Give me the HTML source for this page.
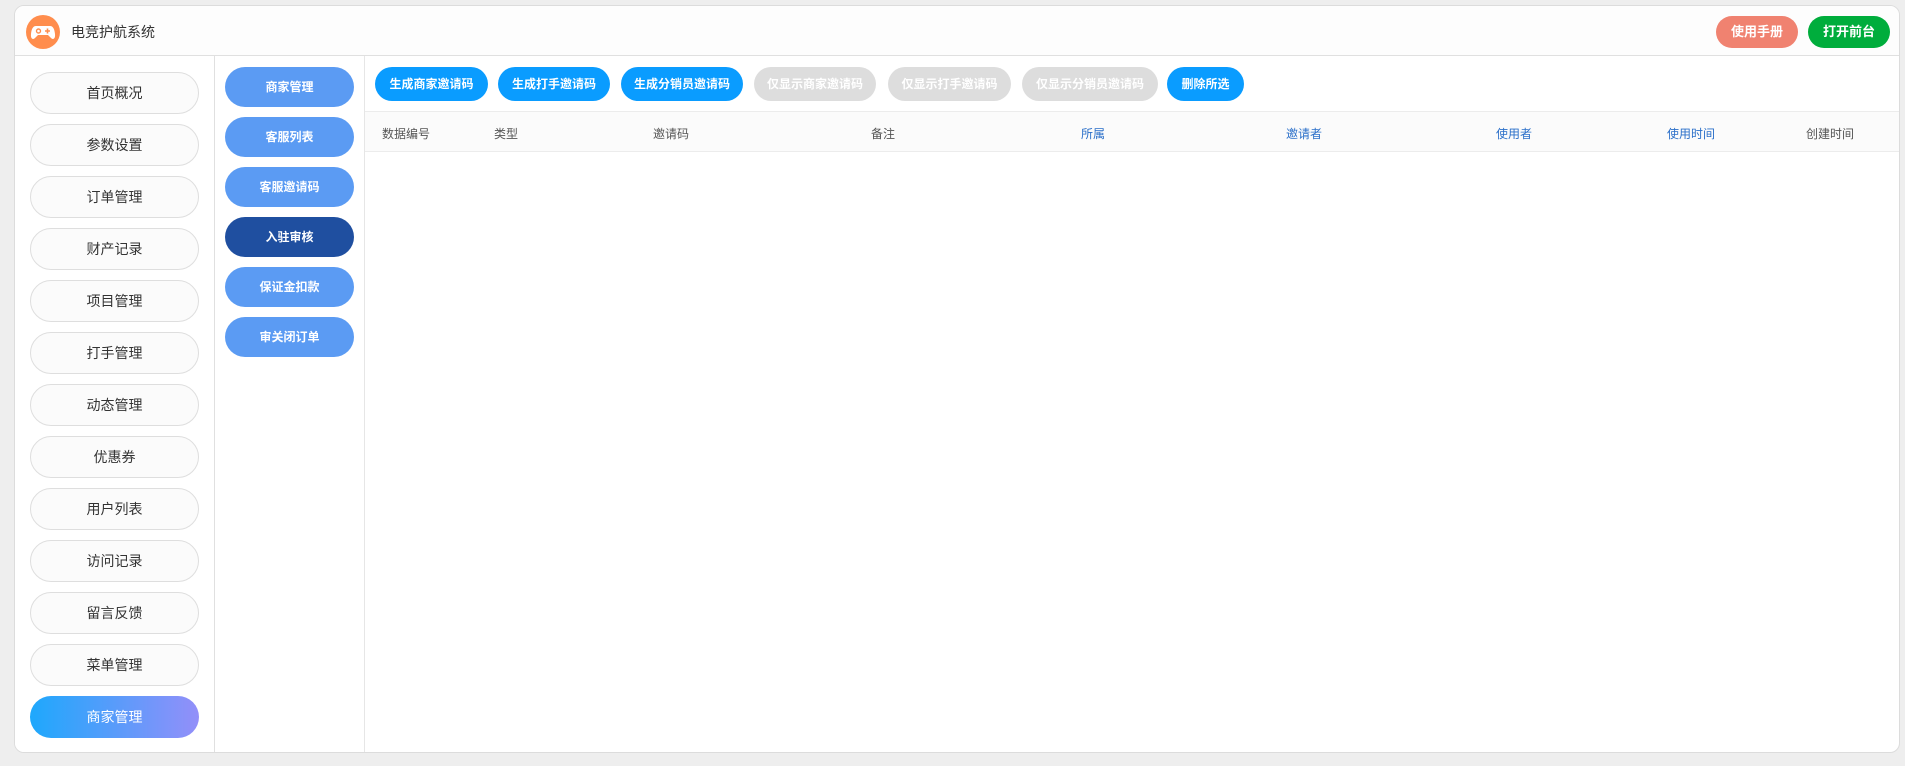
<!DOCTYPE html>
<html><head><meta charset="utf-8"><style>
*{box-sizing:border-box;margin:0;padding:0}
body{width:1905px;height:766px;background:#eeeeee;font-family:"Liberation Sans","Noto Sans CJK SC",sans-serif;position:relative;overflow:hidden}
.card{position:absolute;left:14px;top:5px;width:1886px;height:748px;background:#fff;border:1px solid #dcdcdc;border-radius:10px;overflow:hidden}
.hdr{position:absolute;left:0;top:0;width:100%;height:50px;background:#fdfdfd;border-bottom:1px solid #e0e0e0}
.logo{position:absolute;left:11px;top:9px;width:34px;height:34px}
.title{position:absolute;left:56px;top:16px;font-size:14px;color:#333}
.tb{position:absolute;top:10px;height:32px;line-height:32px;border-radius:16px;color:#fff;font-size:13px;font-weight:bold;text-align:center;width:82px}
.c1{position:absolute;left:0;top:50px;width:200px;bottom:0;border-right:1px solid #e0e0e0;background:#fff}
.c2{position:absolute;left:200px;top:50px;width:150px;bottom:0;border-right:1px solid #e6e6e6;background:#fff}
.b1{position:absolute;left:15px;width:169px;height:42px;line-height:40px;border:1px solid #dedede;border-radius:21px;background:#fbfbfb;text-align:center;font-size:14px;color:#333}
.b1.on{background:linear-gradient(90deg,#1ea8fc,#938ff9);border:none;line-height:42px;color:#fff}
.b2{position:absolute;left:10px;width:129px;height:40px;line-height:40px;border-radius:20px;background:#5b9bf3;color:#fff;font-size:12px;font-weight:bold;text-align:center}
.b2.on{background:#1f4fa0}
.tool{position:absolute;top:61px;height:34px;line-height:34px;border-radius:17px;color:#fff;font-size:12px;font-weight:bold;text-align:center;background:#0a9cff}
.tool.g{background:#dddddd}
.th{position:absolute;left:350px;right:0;top:105px;height:41px;background:#fbfbfb;border-top:1px solid #ececec;border-bottom:1px solid #ececec}
.th span{position:absolute;top:13px;font-size:12px;color:#555}
.th span.bl{color:#2a6fc9}
</style></head><body>
<div class="card">
 <div class="hdr">
  <svg class="logo" viewBox="0 0 34 34"><circle cx="17" cy="17" r="17" fill="#ff8d4d"/><path d="M10 11h14c3 0 4.5 3 5 8s-2 6-4 4l-3-3h-10l-3 3c-2 2-4.5 1-4-4s2-8 5-8z" fill="#fff"/><circle cx="12.5" cy="16" r="2" fill="none" stroke="#ff8d4d" stroke-width="1.4"/><path d="M21.5 13.5v5M19 16h5" stroke="#ff8d4d" stroke-width="1.6"/></svg>
  <div class="title">电竞护航系统</div>
  <div class="tb" style="left:1701px;background:#f08270">使用手册</div>
  <div class="tb" style="left:1793px;background:#00ad3c">打开前台</div>
 </div>
 <div class="c1">
  <div class="b1" style="top:16px">首页概况</div>
  <div class="b1" style="top:68px">参数设置</div>
  <div class="b1" style="top:120px">订单管理</div>
  <div class="b1" style="top:172px">财产记录</div>
  <div class="b1" style="top:224px">项目管理</div>
  <div class="b1" style="top:276px">打手管理</div>
  <div class="b1" style="top:328px">动态管理</div>
  <div class="b1" style="top:380px">优惠券</div>
  <div class="b1" style="top:432px">用户列表</div>
  <div class="b1" style="top:484px">访问记录</div>
  <div class="b1" style="top:536px">留言反馈</div>
  <div class="b1" style="top:588px">菜单管理</div>
  <div class="b1 on" style="top:640px">商家管理</div>
 </div>
 <div class="c2">
  <div class="b2" style="top:11px">商家管理</div>
  <div class="b2" style="top:61px">客服列表</div>
  <div class="b2" style="top:111px">客服邀请码</div>
  <div class="b2 on" style="top:161px">入驻审核</div>
  <div class="b2" style="top:211px">保证金扣款</div>
  <div class="b2" style="top:261px">审关闭订单</div>
 </div>
 <div class="tool" style="left:360px;width:113px">生成商家邀请码</div>
 <div class="tool" style="left:483px;width:112px">生成打手邀请码</div>
 <div class="tool" style="left:606px;width:122px">生成分销员邀请码</div>
 <div class="tool g" style="left:739px;width:122px">仅显示商家邀请码</div>
 <div class="tool g" style="left:873px;width:123px">仅显示打手邀请码</div>
 <div class="tool g" style="left:1007px;width:136px">仅显示分销员邀请码</div>
 <div class="tool" style="left:1152px;width:77px">删除所选</div>
 <div class="th">
  <span style="left:17px">数据编号</span>
  <span style="left:129px">类型</span>
  <span style="left:288px">邀请码</span>
  <span style="left:506px">备注</span>
  <span class="bl" style="left:716px">所属</span>
  <span class="bl" style="left:921px">邀请者</span>
  <span class="bl" style="left:1131px">使用者</span>
  <span class="bl" style="left:1302px">使用时间</span>
  <span style="left:1441px">创建时间</span>
 </div>
</div>
</body></html>
